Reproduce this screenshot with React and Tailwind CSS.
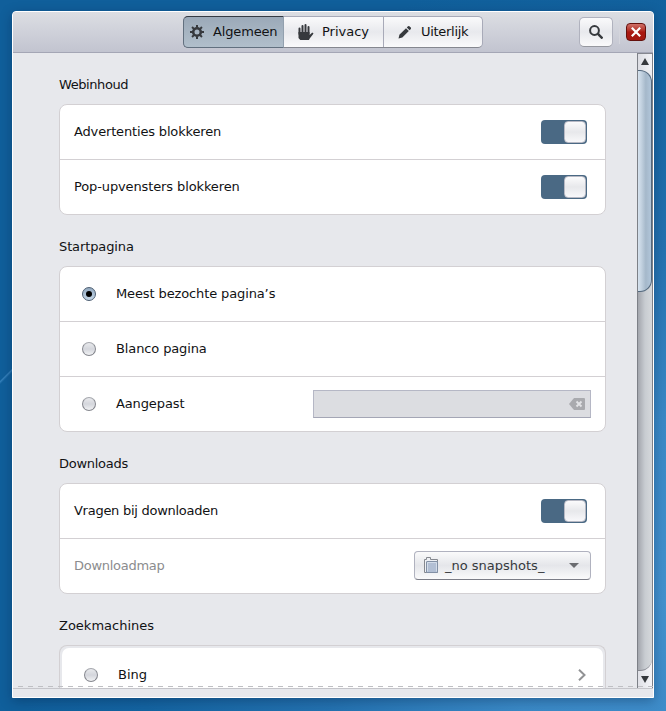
import React from "react";

function Radio({ checked }) {
  return (
    <span
      className={
        "flex h-[14px] w-[14px] shrink-0 items-center justify-center rounded-full border " +
        (checked
          ? "border-[#4d5e72] bg-gradient-to-b from-[#93a9bf] to-[#c5d7e8]"
          : "border-[#85878e] border-t-[#a5a7ad] bg-gradient-to-b from-[#e9eaed] via-[#d4d6dc] to-[#f1f2f4]")
      }
    >
      {checked && <span className="h-[6px] w-[6px] rounded-full bg-black" />}
    </span>
  );
}

function Toggle() {
  return (
    <span className="flex h-6 w-[46px] items-center justify-end rounded-[4px] bg-[#4a6984] pr-px">
      <span className="block h-[22px] w-[22px] rounded-[4px] border border-[#b7b9c4] bg-gradient-to-b from-[#fbfbfc] via-[#e7e8eb] to-[#f8f8fa]" />
    </span>
  );
}

function Section({ title, tracking = "", children }) {
  return (
    <section className="shrink-0">
      <h2 className={"h-[51px] pt-[22px] leading-5 " + tracking}>{title}</h2>
      <div className="divide-y divide-[#d3d0d3] rounded-[8px] border border-[#d3d0d3] bg-white">
        {children}
      </div>
    </section>
  );
}

function Row({ children }) {
  return <div className="box-content flex h-[54px] items-center pr-[18px] pl-[14px]">{children}</div>;
}

function RadioRow({ label, checked, children }) {
  return (
    <div className="box-content flex h-[54px] items-center pr-[14px] pl-[22px]">
      <Radio checked={checked} />
      <span className="ml-5 flex-1 tracking-[-0.12px]">{label}</span>
      {children}
    </div>
  );
}

function Gear() {
  return (
    <svg width="14" height="14" viewBox="0 0 14 14" fill="none" stroke="#36393d">
      <circle cx="7" cy="7" r="3.8" strokeWidth="2.6" />
      <path
        d="M7 0v2.5M7 11.5V14M0 7h2.5M11.5 7H14M2.05 2.05l1.8 1.8M10.15 10.15l1.8 1.8M2.05 11.95l1.8-1.8M10.15 3.85l1.8-1.8"
        strokeWidth="2"
      />
    </svg>
  );
}

function Hand() {
  return (
    <svg width="16" height="16" viewBox="0 0 16 16" fill="none" stroke="#36393d" strokeLinecap="round">
      <path d="M1.5 4.5V10M4.5 2V9M7.5 1V9M10.5 3V10" strokeWidth="2" />
      <path d="M.5 8h11v3l2-1.8c1-.9 2.3-.2 1.7.8L11.7 14.5l-.7 1.5H2.3L.5 14z" fill="#36393d" stroke="none" />
    </svg>
  );
}

function Pencil() {
  return (
    <svg width="14" height="14" viewBox="0 0 14 14" fill="#36393d">
      <path d="M.5 13.5l.9-3.8L8 3.2l2.8 2.8-6.5 6.6z" />
      <path d="M8.8 2.4l1.2-1.2q.7-.6 1.4 0l1.4 1.4q.6.7 0 1.4l-1.2 1.2z" />
    </svg>
  );
}

function Folder() {
  return (
    <svg width="15" height="17" viewBox="0 0 15 17" fill="none">
      <path d="M.5 15.5v-13h2v-2h4v2h7v13z" fill="#eef0f4" stroke="#85888f" />
      <rect x="2.5" y="4.5" width="11" height="11" rx=".5" fill="#b2bfd4" stroke="#8290a5" />
      <path d="M3.5 14.5v-9h9v9" stroke="#d3dce9" />
    </svg>
  );
}

export default function App() {
  return (
    <div className="h-[711px] w-[666px] overflow-hidden bg-[linear-gradient(135deg,transparent_46%,#3a86c0_48%,#2a76b2_52%,transparent_58%),radial-gradient(circle_at_666px_600px,#4391ce_0px,#3a89c6_180px,#2472b0_350px,#1464a1_530px,#105f9b_650px)] bg-[length:16px_16px,100%_100%] bg-[position:-2px_368px,0_0] bg-no-repeat pt-[11px] pl-[12px] font-['DejaVu_Sans',sans-serif] text-[13px] text-[#111214]">
      <div className="flex h-[687px] w-[642px] flex-col overflow-hidden rounded-t-[4px] border border-white bg-[#e7e8ec] shadow-[0_3px_12px_rgba(0,25,60,0.35)]">
        <header className="flex h-[41px] shrink-0 items-center border-b border-[#a4a6b5] bg-gradient-to-b from-[#dcdee3] to-[#c2c4d0] pl-[170px]">
          <nav className="flex h-8 w-[300px] rounded-[5px] border border-[#a8aab8] border-b-[#85878f] bg-gradient-to-b from-[#fafafb] via-[#e8e9ed] to-[#fafafb]">
            <div className="-mt-px -ml-px flex h-8 w-[101px] shrink-0 items-center rounded-l-[5px] border border-[#62707f] border-t-[#343a43] border-r-[#92a0ae] bg-gradient-to-b from-[#9ba9b8] to-[#b1bfcb] pl-[6px]">
              <Gear />
              <span className="ml-[9px] tracking-[-0.15px]">Algemeen</span>
            </div>
            <div className="flex w-[100px] shrink-0 items-center border-r border-[#a8aab8] pl-[14px]">
              <Hand />
              <span className="ml-[8px]">Privacy</span>
            </div>
            <div className="flex items-center pl-[14px]">
              <Pencil />
              <span className="ml-[9px] tracking-[-0.3px]">Uiterlijk</span>
            </div>
          </nav>
          <button className="ml-24 flex h-[30px] w-[34px] items-center justify-center rounded-[5px] border border-[#b0b2be] border-b-[#96989f] bg-gradient-to-b from-[#fafafb] via-[#e8e9ed] to-[#fafafb]">
            <svg width="14" height="14" viewBox="0 0 14 14" fill="none" stroke="#36393d">
              <circle cx="5.5" cy="5.5" r="4.4" strokeWidth="2" />
              <path d="M8.7 8.7l4.8 4.8" strokeWidth="2.4" />
            </svg>
          </button>
          <span className="ml-[6px] h-6 w-px bg-[#d4d5dc]" />
          <button className="ml-[6px] flex h-[18px] w-[20px] items-center justify-center rounded-[4px] border border-[#64100c] bg-gradient-to-b from-[#d07068] via-[#aa1710] to-[#a31811]">
            <svg width="10" height="10" viewBox="0 0 10 10" stroke="#fff" strokeWidth="2.2">
              <path d="M.8.8l8.4 8.4M9.2.8L.8 9.2" />
            </svg>
          </button>
        </header>

        <div className="flex h-[635px] shrink-0 overflow-hidden">
          <main className="flex h-[635px] w-[624px] shrink-0 flex-col overflow-hidden pr-[31px] pl-[46px]">
            <Section title="Webinhoud" tracking="tracking-[-0.42px]">
              <Row>
                <span className="flex-1 tracking-[-0.16px]">Advertenties blokkeren</span>
                <Toggle />
              </Row>
              <Row>
                <span className="flex-1 tracking-[-0.12px]">Pop-upvensters blokkeren</span>
                <Toggle />
              </Row>
            </Section>
            <Section title="Startpagina" tracking="tracking-[-0.12px]">
              <RadioRow label="Meest bezochte pagina’s" checked />
              <RadioRow label="Blanco pagina" />
              <RadioRow label="Aangepast">
                <span className="flex h-7 w-[278px] items-center justify-end border border-[#b5b7c5] border-b-[#a4a6b5] bg-[#dcdde1] pr-[5px]">
                  <svg width="16" height="12" viewBox="0 0 16 12">
                    <path d="M0 6l5-6h10q1 0 1 1v10q0 1-1 1H5z" fill="#a9aaae" />
                    <path d="M7.5 3.5l5 5M12.5 3.5l-5 5" stroke="#e2e3e6" strokeWidth="1.9" />
                  </svg>
                </span>
              </RadioRow>
            </Section>
            <Section title="Downloads" tracking="tracking-[-0.27px]">
              <Row>
                <span className="flex-1 tracking-[-0.27px]">Vragen bij downloaden</span>
                <Toggle />
              </Row>
              <div className="box-content flex h-[54px] items-center pr-[14px] pl-[14px]">
                <span className="flex-1 tracking-[-0.27px] text-[#8b8c8e]">Downloadmap</span>
                <button className="-mt-px flex h-[29px] w-[177px] items-center rounded-[4px] border border-[#b0b2bf] border-b-[#7b7d87] bg-gradient-to-b from-[#fafafb] via-[#e5e6ea] to-[#fafafb] pl-[9px] text-left text-[#36393d]">
                  <Folder />
                  <span className="ml-[6px] flex-1">_no snapshots_</span>
                  <span className="mr-[11px] h-0 w-0 border-x-[5px] border-t-[5px] border-x-transparent border-t-[#6a6c70]" />
                </button>
              </div>
            </Section>
            <section className="shrink-0">
              <h2 className="h-[51px] pt-[22px] leading-5">Zoekmachines</h2>
              <div className="h-[60px] rounded-t-[8px] border border-b-0 border-[#d3d0d3] px-[2px] pt-[2px]">
                <div className="flex h-[54px] items-center rounded-t-[7px] bg-white pr-[16px] pl-[22px]">
                  <Radio />
                  <span className="ml-5 flex-1">Bing</span>
                  <svg width="9" height="12" viewBox="0 0 9 12" fill="none" stroke="#919294" strokeWidth="2">
                    <path d="M1 .8L6.5 6 1 11.2" />
                  </svg>
                </div>
              </div>
            </section>
          </main>

          <div className="flex h-[635px] w-4 shrink-0 flex-col border-x border-l-[#7d8087] border-r-[#7d8087] bg-gradient-to-r from-[#a9acb2] via-[#c8ccd1] to-[#d5d8db]">
            <div className="flex h-[17px] shrink-0 items-center justify-center border-t border-[#85878f] bg-gradient-to-r from-[#dcdde3] to-[#f4f4f7] pb-[2px]">
              <span className="h-0 w-0 border-x-[4px] border-b-[7px] border-x-transparent border-b-[#36393d]" />
            </div>
            <div className="h-[222px] shrink-0 bg-[linear-gradient(to_bottom,#ebecf0_50%,transparent_50%)]">
              <div className="h-[222px] rounded-r-[12px] border border-l-0 border-[#53687d] bg-[linear-gradient(to_right,#d6e2ee_0%,#c4d3e1_25%,#a5b8ca_60%,#b1c6da_100%)]" />
            </div>
            <div className="flex-1 bg-gradient-to-r from-[#e5e6eb] to-[#f4f4f7]">
              <div className="h-full rounded-br-[12px] border-b border-[#85878f] bg-gradient-to-r from-[#a3a6ad] via-[#c8ccd1] to-[#d5d8db]" />
            </div>
            <div className="flex h-[17px] shrink-0 items-center justify-center bg-gradient-to-r from-[#e0e1e7] to-[#f4f4f7]">
              <span className="h-0 w-0 border-x-[4px] border-t-[7px] border-x-transparent border-t-[#36393d]" />
            </div>
          </div>
        </div>
        <div className="relative h-[9px] shrink-0 border-t border-[#c5c5ca]">
          <span className="absolute -top-[3px] left-0 h-px w-[640px] bg-[repeating-linear-gradient(to_right,transparent_0px,transparent_5px,#bfbfc3_5px,#bfbfc3_10px)]" />
        </div>
      </div>
    </div>
  );
}
